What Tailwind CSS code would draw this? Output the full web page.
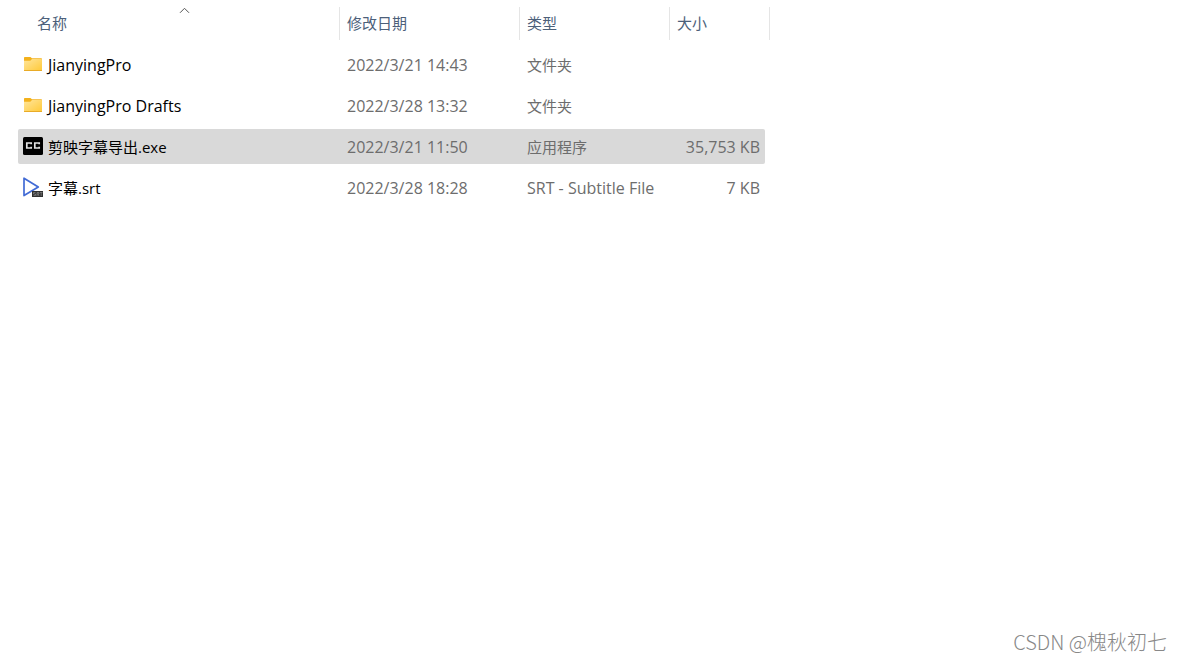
<!DOCTYPE html>
<html lang="zh-CN">
<head>
<meta charset="utf-8">
<meta name="viewport" content="width=device-width, initial-scale=1">
<title>文件列表</title>
<script src="https://cdn.jsdelivr.net/npm/@tailwindcss/browser@4"></script>
</head>
<body class="flex min-h-screen flex-col bg-white font-['Open_Sans','Noto_Sans_CJK_SC',sans-serif] text-base leading-6 text-[#6d6d6d]">
<svg class="absolute size-0" aria-hidden="true">
  <defs>
    <linearGradient id="folder-front" x1="0" y1="0" x2="1" y2="1">
      <stop offset="0" stop-color="#ffe59b"/>
      <stop offset="1" stop-color="#ffc937"/>
    </linearGradient>
    <symbol id="folder" viewBox="0 0 20 20">
      <path d="M1 3.8Q1 3 1.8 3H7.4L9 4.2H18.2Q19 4.2 19 5V8H1Z" fill="#f3b11c"/>
      <path d="M1 6.8H7.3L9 5H18.4Q19 5 19 5.6V16.4Q19 17 18.4 17H1.6Q1 17 1 16.4Z" fill="url(#folder-front)"/>
      <path d="M1 16H19V16.4Q19 17 18.4 17H1.6Q1 17 1 16.4Z" fill="#e9ab27"/>
    </symbol>
  </defs>
</svg>
<main class="grow pl-[18px]">
  <table class="w-[752px] table-fixed border-separate border-spacing-x-0 border-spacing-y-[6px] whitespace-nowrap">
    <colgroup>
      <col class="w-[322px]"><col class="w-[180px]"><col class="w-[150px]"><col class="w-[95px]"><col class="w-[5px]">
    </colgroup>
    <thead class="text-left text-[15px] text-[#4c607a]">
      <tr class="h-[35px]">
        <th scope="col" aria-sort="ascending" class="p-0 font-normal">
          <button type="button" class="relative flex h-[33px] w-full items-center border-r border-[#e5e5e5] pb-[2px] pl-[19px]">名称
            <svg class="absolute top-0 left-[161px] h-[7px] w-[11px]" viewBox="0 0 11 7" fill="none" stroke="#555" aria-hidden="true"><path d="M1 5.8 5.5 1.3 10 5.8"/></svg>
          </button>
        </th>
        <th scope="col" class="p-0 font-normal"><button type="button" class="flex h-[33px] w-full items-center border-r border-[#e5e5e5] pb-[2px] pl-[7px]">修改日期</button></th>
        <th scope="col" class="p-0 font-normal"><button type="button" class="flex h-[33px] w-full items-center border-r border-[#e5e5e5] pb-[2px] pl-[7px]">类型</button></th>
        <th scope="col" colspan="2" class="p-0 font-normal"><button type="button" class="flex h-[33px] w-full items-center border-r border-[#e5e5e5] pb-[2px] pl-[7px]">大小</button></th>
      </tr>
    </thead>
    <tbody>
      <tr class="h-[35px]">
        <td class="p-0"><div class="flex items-center gap-[5px] pl-[5px] text-black"><svg class="mb-[2px] size-5" aria-hidden="true"><use href="#folder"/></svg><span>JianyingPro</span></div></td>
        <td class="p-0 pl-[7px]">2022/3/21 14:43</td>
        <td class="p-0 pl-[7px] text-[15px]">文件夹</td>
        <td class="p-0"></td>
      </tr>
      <tr class="h-[35px]">
        <td class="p-0"><div class="flex items-center gap-[5px] pl-[5px] text-black"><svg class="mb-[2px] size-5" aria-hidden="true"><use href="#folder"/></svg><span>JianyingPro Drafts</span></div></td>
        <td class="p-0 pl-[7px]">2022/3/28 13:32</td>
        <td class="p-0 pl-[7px] text-[15px]">文件夹</td>
        <td class="p-0"></td>
      </tr>
      <tr class="h-[35px]" aria-selected="true">
        <td class="rounded-l-xs bg-[#d9d9d9] p-0"><div class="flex items-center gap-[5px] pl-[5px] text-[15px] text-black">
          <svg class="mb-[2px] size-5" viewBox="0 0 20 20" aria-hidden="true"><rect y="1" width="20" height="18" rx="1.5"/><path d="M8.2 8.3V7H3.8V12H8.2V10.7M16.2 8.3V7H11.8V12H16.2V10.7" fill="none" stroke="#e4e4e4" stroke-width="1.7"/></svg>
          <span>剪映字幕导出.exe</span></div></td>
        <td class="bg-[#d9d9d9] p-0 pl-[7px]">2022/3/21 11:50</td>
        <td class="bg-[#d9d9d9] p-0 pl-[7px] text-[15px]">应用程序</td>
        <td class="rounded-r-xs bg-[#d9d9d9] p-0 pr-[5px] text-right">35,753 KB</td>
      </tr>
      <tr class="h-[35px]">
        <td class="p-0"><div class="flex items-center gap-[5px] pl-[5px] text-[15px] text-black">
          <svg class="mb-[2px] size-5" viewBox="0 0 20 20" aria-hidden="true"><path d="M1 1.2V18.6L15.3 10Z" fill="none" stroke="#426bd5" stroke-width="1.7" stroke-linejoin="round"/><rect x="9" y="14" width="11" height="6" fill="#303030"/><path d="M12.5 15.5H10.5V17H12.5V18.5H10.5M14 19V15.5H16V17H14M15 17 16 19M17 15.5H19.5M18.2 15.5V19" fill="none" stroke="#999" stroke-width=".6"/></svg>
          <span>字幕.srt</span></div></td>
        <td class="p-0 pl-[7px]">2022/3/28 18:28</td>
        <td class="p-0 pl-[7px]">SRT - Subtitle File</td>
        <td class="p-0 pr-[5px] text-right">7 KB</td>
      </tr>
    </tbody>
  </table>
</main>
<footer class="pr-[15px] pb-1 text-right font-['Noto_Sans_CJK_SC',sans-serif] text-xl leading-[30px] font-light text-[#888]">CSDN @槐秋初七</footer>
</body>
</html>
